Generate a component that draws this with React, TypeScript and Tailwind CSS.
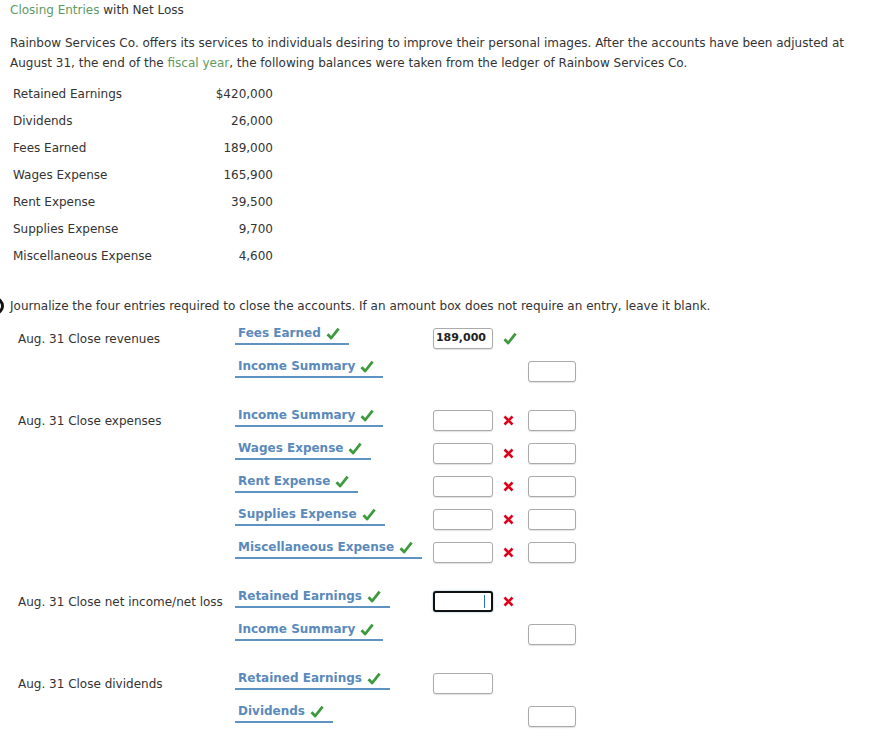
import React from 'react';

const balances = [
  { name: 'Retained Earnings', amount: '$420,000' },
  { name: 'Dividends', amount: '26,000' },
  { name: 'Fees Earned', amount: '189,000' },
  { name: 'Wages Expense', amount: '165,900' },
  { name: 'Rent Expense', amount: '39,500' },
  { name: 'Supplies Expense', amount: '9,700' },
  { name: 'Miscellaneous Expense', amount: '4,600' },
];

type Line = {
  account: string;
  side: 'debit' | 'credit';
  value?: string;
  mark?: 'check' | 'x';
  focused?: boolean;
  credit?: boolean;
};

const entries: { label: string; lines: Line[] }[] = [
  {
    label: 'Aug. 31 Close revenues',
    lines: [
      { account: 'Fees Earned', side: 'debit', value: '189,000', mark: 'check' },
      { account: 'Income Summary', side: 'credit' },
    ],
  },
  {
    label: 'Aug. 31 Close expenses',
    lines: [
      { account: 'Income Summary', side: 'debit', mark: 'x', credit: true },
      { account: 'Wages Expense', side: 'debit', mark: 'x', credit: true },
      { account: 'Rent Expense', side: 'debit', mark: 'x', credit: true },
      { account: 'Supplies Expense', side: 'debit', mark: 'x', credit: true },
      { account: 'Miscellaneous Expense', side: 'debit', mark: 'x', credit: true },
    ],
  },
  {
    label: 'Aug. 31 Close net income/net loss',
    lines: [
      { account: 'Retained Earnings', side: 'debit', mark: 'x', focused: true },
      { account: 'Income Summary', side: 'credit' },
    ],
  },
  {
    label: 'Aug. 31 Close dividends',
    lines: [
      { account: 'Retained Earnings', side: 'debit' },
      { account: 'Dividends', side: 'credit' },
    ],
  },
];

function Check() {
  return (
    <svg width="14" height="13" viewBox="0 0 14 13" className="shrink-0">
      <path d="M1.5 7.2 L5.2 11 L12.6 1.6" fill="none" stroke="#3d9a3d" strokeWidth="2.8" strokeLinejoin="round" />
    </svg>
  );
}

function Cross() {
  return (
    <svg width="11" height="11" viewBox="0 0 11 11">
      <path d="M1.5 1.5 L9.5 9.5 M9.5 1.5 L1.5 9.5" stroke="#e0001b" strokeWidth="2.6" />
    </svg>
  );
}

function Box({ wide, value, focused }: { wide?: boolean; value?: string; focused?: boolean }) {
  return (
    <div
      className={`flex h-[21px] items-center justify-end rounded-[3px] bg-white px-[6px] text-[11px] font-bold text-[#222] ${
        wide ? 'w-[60px]' : 'w-[48px]'
      } ${focused ? 'border-2 border-[#111] shadow-[0_0_2px_#7ab]' : 'border border-[#aaa] shadow-[0_1px_1px_rgba(0,0,0,0.12)]'}`}
    >
      {value}
      {focused && <span className="h-[13px] w-px bg-[#2a6fc9]" />}
    </div>
  );
}

export default function App() {
  return (
    <div className="min-h-[739px] bg-white px-[10px] pt-[2px] text-[12px] text-[#333]" style={{ fontFamily: '"DejaVu Sans", Verdana, sans-serif' }}>
      <div className="leading-[16px]">
        <span className="text-[#5e9a5e]">Closing Entries</span> with Net Loss
      </div>

      <p className="mt-[15px] leading-[20px]">
        Rainbow Services Co. offers its services to individuals desiring to improve their personal images. After the accounts have been adjusted at August 31, the end of the{' '}
        <span className="text-[#5e9a5e]">fiscal year</span>, the following balances were taken from the ledger of Rainbow Services Co.
      </p>

      <table className="mt-[7px] border-collapse">
        <tbody>
          {balances.map((b) => (
            <tr key={b.name} className="h-[27px]">
              <td className="w-[203px] pl-[3px]">{b.name}</td>
              <td className="w-[60px] text-right">{b.amount}</td>
            </tr>
          ))}
        </tbody>
      </table>

      <div className="relative mt-[29px] leading-[16px]">
        <span className="absolute left-[-24px] top-[-1px] h-[18px] w-[18px] rounded-full border-[3px] border-[#111]" />
        Journalize the four entries required to close the accounts. If an amount box does not require an entry, leave it blank.
      </div>

      <div className="mt-[8px] flex flex-col gap-[16px] pl-[8px]">
        {entries.map((e) => (
          <div key={e.label} className="flex flex-col">
            {e.lines.map((l, i) => (
              <div key={i} className="grid h-[33px] grid-cols-[217px_198px_95px_48px] items-center">
                <div className="whitespace-nowrap">{i === 0 ? e.label : ''}</div>
                <div className="self-start pt-[2px]">
                  <span className="inline-flex items-center gap-[5px] whitespace-nowrap border-b-2 border-[#5f93c2] pb-[2px] pl-[3px] pr-[9px] text-[12px] font-bold leading-[16px] text-[#5a8abb]">
                    {l.account}
                    <Check />
                  </span>
                </div>
                <div className="flex items-center gap-[10px]">
                  {l.side === 'debit' ? <Box wide value={l.value} focused={l.focused} /> : <span />}
                  {l.mark === 'check' && <Check />}
                  {l.mark === 'x' && <Cross />}
                </div>
                <div>{l.side === 'credit' || l.credit ? <Box /> : null}</div>
              </div>
            ))}
          </div>
        ))}
      </div>
    </div>
  );
}
